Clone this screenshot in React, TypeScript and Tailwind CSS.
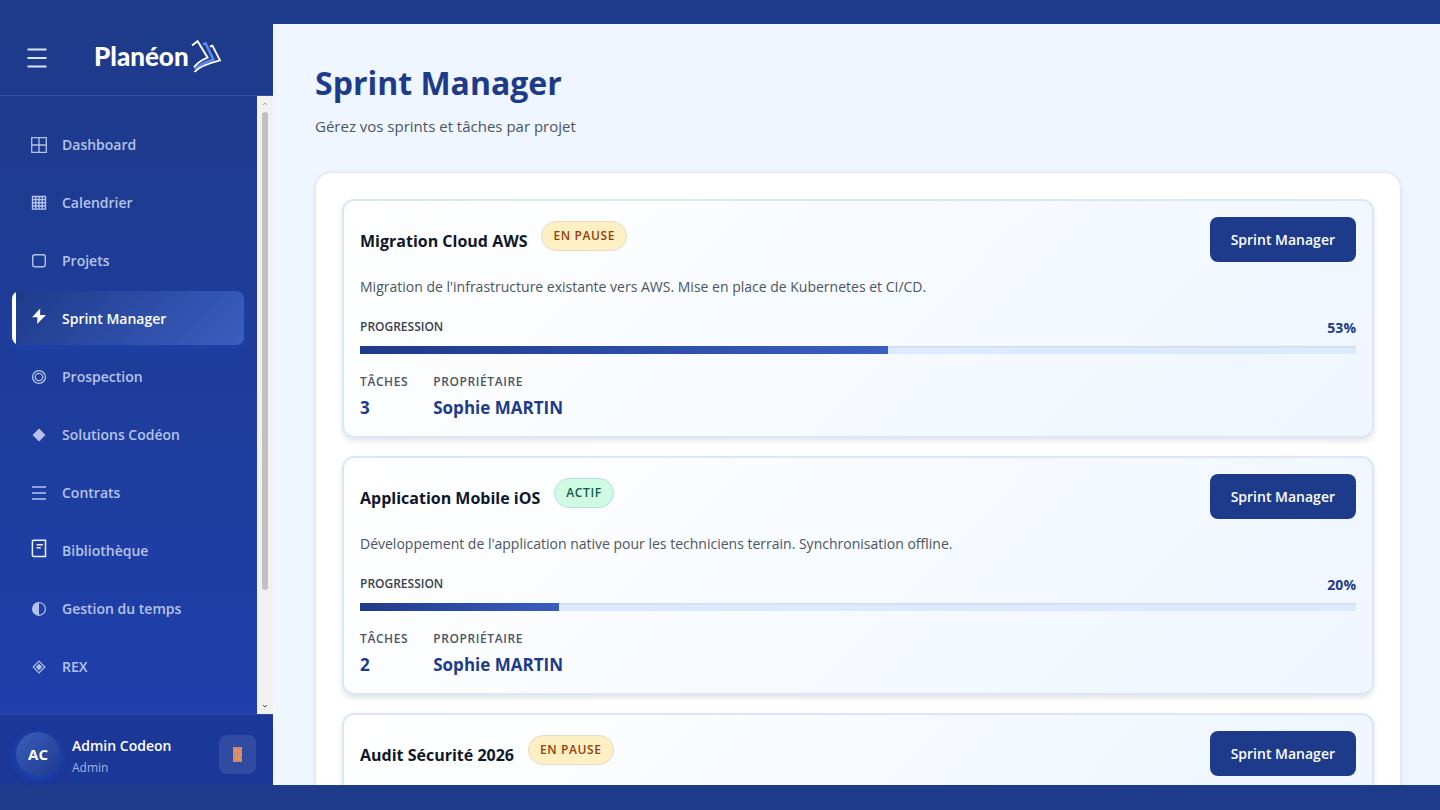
import type { ReactNode } from "react";
import { clsx } from "clsx";

type NavItem = {
    key: string;
    label: string;
    icon: ReactNode;
};

type ProjectStatus = "paused" | "active";

type ProjectDetails = {
    description: string;
    progress: number;
    tasks: number;
    owner: string;
};

type Project = {
    id: number;
    name: string;
    status: ProjectStatus;
    details?: ProjectDetails;
};

const ACTIVE_NAV_KEY = "sprint";

const navItems: NavItem[] = [
    {
        key: "dashboard",
        label: "Dashboard",
        icon: (
            <path d="M1.7 2.7h14.6v14.6H1.7zM9 2.7v14.6M1.7 10h14.6" fill="none" stroke="currentColor" strokeWidth="1.3" />
        ),
    },
    {
        key: "calendar",
        label: "Calendrier",
        icon: (
            <path
                d="M2.5 3.5h13v12.6h-13zM5.75 3.5v12.6M9 3.5v12.6M12.25 3.5v12.6M2.5 6.6h13M2.5 9.8h13M2.5 13h13"
                fill="none"
                stroke="currentColor"
                strokeWidth="1.4"
            />
        ),
    },
    {
        key: "projects",
        label: "Projets",
        icon: (
            <rect x="2.7" y="3.7" width="12.6" height="12" rx="2.2" fill="none" stroke="currentColor" strokeWidth="1.4" />
        ),
    },
    {
        key: "sprint",
        label: "Sprint Manager",
        icon: <path d="M10.2-.5 2 8.3h5.4L7.1 15 16 5.9h-5.9z" fill="currentColor" />,
    },
    {
        key: "prospecting",
        label: "Prospection",
        icon: (
            <g fill="none" stroke="currentColor" strokeWidth="1.3">
                <circle cx="9" cy="10" r="6.4" />
                <circle cx="9" cy="10" r="3.7" />
            </g>
        ),
    },
    {
        key: "solutions",
        label: "Solutions Codéon",
        icon: <path d="M9 3.6 15.4 10 9 16.4 2.6 10z" fill="currentColor" />,
    },
    {
        key: "contracts",
        label: "Contrats",
        icon: <path d="M2 4h14M2 10h14M2 16h14" fill="none" stroke="currentColor" strokeWidth="1.5" />,
    },
    {
        key: "library",
        label: "Bibliothèque",
        icon: (
            <g fill="none" stroke="#eef2ff" strokeWidth="1.5">
                <path d="M3.6-.8h11.9v16.2H3.6a1.2 1.2 0 0 1-1.2-1.2V.4A1.2 1.2 0 0 1 3.6-.8z" />
                <path d="M6.6 3.7h6.2M6.6 6.7h4.2" />
            </g>
        ),
    },
    {
        key: "time",
        label: "Gestion du temps",
        icon: (
            <>
                <circle cx="9" cy="9.9" r="6.4" fill="none" stroke="currentColor" strokeWidth="1.2" />
                <path d="M9 3.5a6.4 6.4 0 0 0 0 12.8z" fill="currentColor" />
            </>
        ),
    },
    {
        key: "rex",
        label: "REX",
        icon: (
            <>
                <path d="M9 4.2 14.8 10 9 15.8 3.2 10z" fill="none" stroke="currentColor" strokeWidth="1.2" />
                <path d="M9 6.8 12.2 10 9 13.2 5.8 10z" fill="currentColor" />
            </>
        ),
    },
];

const projects: Project[] = [
    {
        id: 1,
        name: "Migration Cloud AWS",
        status: "paused",
        details: {
            description:
                "Migration de l'infrastructure existante vers AWS. Mise en place de Kubernetes et CI/CD.",
            progress: 53,
            tasks: 3,
            owner: "Sophie MARTIN",
        },
    },
    {
        id: 2,
        name: "Application Mobile iOS",
        status: "active",
        details: {
            description:
                "Développement de l'application native pour les techniciens terrain. Synchronisation offline.",
            progress: 20,
            tasks: 2,
            owner: "Sophie MARTIN",
        },
    },
    {
        id: 3,
        name: "Audit Sécurité 2026",
        status: "paused",
    },
];

const statusLabels: Record<ProjectStatus, string> = {
    paused: "EN PAUSE",
    active: "ACTIF",
};

const statusClasses: Record<ProjectStatus, string> = {
    paused: "border-[#dfdccb] bg-[#fef0c3] text-[#92400e]",
    active: "border-[#b5e2dc] bg-[#d1fae5] text-[#065f46]",
};

function Logo() {
    return (
        <div className="flex items-center text-white">
            <span className="font-['Lato','Open_Sans',sans-serif] text-[26px] leading-8 font-black">
                Planéon
            </span>
            <svg viewBox="0 0 33 35" className="h-[35px] w-[33px]" fill="none" aria-hidden="true">
                <path d="M3 7.6 8.6 3.2 18.6 19.6Q9 23.5 5 29.4" stroke="#fff" strokeWidth="1.9" />
                <path d="M14 6.4 16.6 5.4 24.4 21.4Q10 26 6 31.2" stroke="#5b86ee" strokeWidth="2.6" />
                <path d="M21 8.6 23.4 7.6 31 22.4Q11 27.5 5.4 34" stroke="#fff" strokeWidth="1.9" />
            </svg>
        </div>
    );
}

function Sidebar() {
    return (
        <aside className="flex w-[273px] shrink-0 flex-col bg-linear-to-b from-[#1e3a8a] to-[#1e40af]">
            <div className="flex h-18 shrink-0 items-center border-b border-white/10 pb-1 pl-[26px]">
                <button type="button" aria-label="Réduire le menu" className="mr-[46px] text-[#dbe4ff]">
                    <svg viewBox="0 0 22 22" className="size-[22px]" fill="none" stroke="currentColor" strokeWidth="2">
                        <path d="M1.5 2.5h19M1.5 11h19M1.5 19.5h19" />
                    </svg>
                </button>
                <div className="pb-1">
                    <Logo />
                </div>
            </div>

            <div className="flex min-h-0 flex-1">
                <nav className="min-w-0 flex-1 overflow-y-auto py-[21px] pr-[13px] pl-3 [scrollbar-width:none]">
                    <ul className="space-y-1">
                        {navItems.map((item) => {
                            const isActive = item.key === ACTIVE_NAV_KEY;
                            return (
                                <li key={item.key}>
                                    <a
                                        href={`#${item.key}`}
                                        aria-current={isActive ? "page" : undefined}
                                        className={clsx(
                                            "relative flex h-[54px] items-center gap-3.5 overflow-hidden rounded-lg pl-[18px] text-[14px] font-semibold",
                                            isActive
                                                ? "bg-linear-135 from-[#1e3a8a] to-[#3b5fc0] text-white shadow-[0_4px_12px_rgba(29,78,216,0.35)]"
                                                : "text-[#b5c3ec]",
                                        )}
                                    >
                                        {isActive ? (
                                            <span className="absolute inset-y-0 left-0 w-1 bg-white" />
                                        ) : null}
                                        <svg
                                            viewBox="0 0 18 18"
                                            className="size-[18px] shrink-0 overflow-visible"
                                            aria-hidden="true"
                                        >
                                            {item.icon}
                                        </svg>
                                        <span>{item.label}</span>
                                    </a>
                                </li>
                            );
                        })}
                    </ul>
                </nav>
                <div className="flex w-4 shrink-0 flex-col items-center bg-[#f1f1f1] py-1" aria-hidden="true">
                    <svg viewBox="0 0 6 8" className="h-2 w-1.5" fill="none" stroke="#a3a3a3">
                        <path d="M1 5 3 3l2 2" />
                    </svg>
                    <div className="mt-1 min-h-0 w-1.5 flex-1">
                        <div className="h-[81%] rounded-full bg-[#c1c1c1]" />
                    </div>
                    <svg viewBox="0 0 6 8" className="h-2 w-1.5" fill="none" stroke="#505050">
                        <path d="m1 3 2 2 2-2" />
                    </svg>
                </div>
            </div>

            <div className="flex h-[71px] shrink-0 items-center border-t border-white/10 bg-[#1b3798] pt-2 pr-[17px] pl-4">
                <div className="flex size-11 shrink-0 items-center justify-center rounded-full bg-linear-135 from-[#3b5fc0] to-[#1e3a8a] text-[15px] font-bold text-white shadow-[0_2px_8px_rgba(37,99,235,0.4)]">
                    AC
                </div>
                <div className="ml-3 min-w-0 flex-1 pt-1">
                    <p className="text-[14px] leading-6 font-semibold text-white">Admin Codeon</p>
                    <p className="text-[12px] leading-5 text-[#a4b3df]">Admin</p>
                </div>
                <button
                    type="button"
                    aria-label="Se déconnecter"
                    className="flex h-[39px] w-[37px] items-center justify-center rounded-lg bg-white/10"
                >
                    <svg viewBox="0 0 9 15" className="h-[15px] w-[9px]" aria-hidden="true">
                        <path d="M0 0h9v15H0z" fill="#d18a68" />
                        <path d="M2 2h2v4H2zM5 2h2v4H5zM2 8h2v5H2zM5 8h2v5H5z" fill="#de9468" />
                        <circle cx="7.5" cy="7.5" r=".8" fill="#f5c26b" />
                    </svg>
                </button>
            </div>
        </aside>
    );
}

function ProjectCardDetails({ details }: { details: ProjectDetails }) {
    const labelClass = "text-[12px] leading-5 font-semibold tracking-wider text-[#4b5563]";
    const valueClass = "mt-1 text-[17px] leading-6 font-bold text-[#1e3a8a]";

    return (
        <>
            <p className="mt-[13px] text-[14px] leading-6 text-[#4b5563]">{details.description}</p>

            <div className="mt-4 flex h-6 items-center justify-between">
                <span className="text-[12px] font-semibold text-[#374151]">PROGRESSION</span>
                <span className="text-[14px] font-bold text-[#1e3a8a]">{details.progress}%</span>
            </div>
            <div
                role="progressbar"
                aria-label="Progression"
                aria-valuenow={details.progress}
                aria-valuemin={0}
                aria-valuemax={100}
                className="mt-[7px] h-2 bg-[#dbeafe] shadow-[inset_0_1px_2px_rgba(0,0,0,0.08)]"
            >
                <div
                    className="h-full bg-linear-to-r from-[#1e3a8a] to-[#3b5fc0]"
                    style={{ width: `${details.progress}%` }}
                />
            </div>

            <dl className="mt-[18px] flex gap-[25px]">
                <div>
                    <dt className={labelClass}>TÂCHES</dt>
                    <dd className={valueClass}>{details.tasks}</dd>
                </div>
                <div>
                    <dt className={labelClass}>PROPRIÉTAIRE</dt>
                    <dd className={valueClass}>{details.owner}</dd>
                </div>
            </dl>
        </>
    );
}

function ProjectCard({ project }: { project: Project }) {
    return (
        <article className="rounded-xl border-2 border-[#dbe7f8] bg-linear-135 from-white to-[#eff6ff] p-4 shadow-[0_3px_5px_rgba(30,41,59,0.12)]">
            <div className="flex h-[45px] items-start justify-between">
                <div className="flex items-start gap-3.5 pt-1">
                    <h2 className="pt-1.5 text-[16px] leading-7 font-bold text-[#0f172a]">{project.name}</h2>
                    <span
                        className={clsx(
                            "rounded-full border px-[11px] text-[12px] leading-7 font-semibold tracking-wider",
                            statusClasses[project.status],
                        )}
                    >
                        {statusLabels[project.status]}
                    </span>
                </div>
                <button
                    type="button"
                    className="h-[45px] rounded-lg bg-[#1e3a8a] px-[21px] text-[14px] font-semibold text-white"
                >
                    Sprint Manager
                </button>
            </div>

            {project.details ? <ProjectCardDetails details={project.details} /> : null}
        </article>
    );
}

export default function App() {
    return (
        <div className="flex h-screen overflow-hidden border-t-24 border-b-25 border-[#1e3a8a] bg-[#eff6ff] font-['Open_Sans','Noto_Sans',sans-serif]">
            <Sidebar />
            <main className="min-w-0 flex-1 overflow-y-auto pt-9 pr-[39px] pb-10 pl-[42px] [scrollbar-width:none]">
                <h1 className="text-[32px] leading-[46px] font-bold text-[#1e3a8a]">Sprint Manager</h1>
                <p className="mt-2 text-[15px] leading-6 text-[#4b5563]">Gérez vos sprints et tâches par projet</p>

                <section className="mt-[34px] space-y-[18px] rounded-2xl border border-[#dfe9f8] bg-white p-[26px] shadow-[0_1px_4px_rgba(30,58,138,0.12)]">
                    {projects.map((project) => (
                        <ProjectCard key={project.id} project={project} />
                    ))}
                </section>
            </main>
        </div>
    );
}
